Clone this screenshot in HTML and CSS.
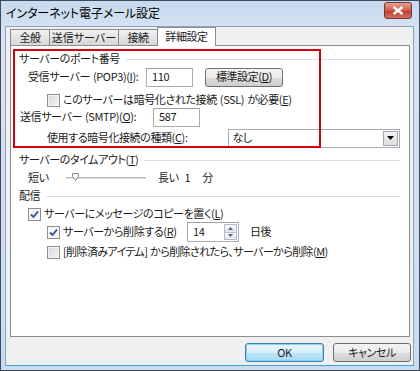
FILE: index.html
```html
<html>
  <head>
    <meta charset="utf-8">
    <link rel="stylesheet" href="styles.css">
  </head>
  <body>
    <div class="window">
      <div class="titlebar">
        <span class="title">インターネット電子メール設定</span>
        <span class="close">
          <svg width="12" height="9" viewBox="0 0 12 9"><path d="M1.5 1 L10.5 8 M10.5 1 L1.5 8" stroke="#fff" stroke-width="2.4"/></svg>
        </span>
      </div>
      <div class="client">
        <div class="tabs">
          <span class="tab t1">全般</span>
          <span class="tab t2">送信サーバー</span>
          <span class="tab t3">接続</span>
          <span class="tab sel">詳細設定</span>
        </div>
        <div class="panel">
          <div class="mark"></div>

          <div class="group g1"><span>サーバーのポート番号</span><i></i></div>
          <div class="row r-pop">
            <span class="lbl w-pop">受信サーバー (POP3)(<u>I</u>):</span>
            <span class="field f-pop">110</span>
            <span class="btn b-std">標準設定(<u>D</u>)</span>
          </div>
          <div class="row r-ssl">
            <span class="chk off"></span>
            <span>このサーバーは暗号化された接続 (SSL) が必要(<u>E</u>)</span>
          </div>
          <div class="row r-smtp">
            <span class="lbl w-smtp">送信サーバー (SMTP)(<u>O</u>):</span>
            <span class="field f-smtp">587</span>
          </div>
          <div class="row r-enc">
            <span class="lbl w-enc">使用する暗号化接続の種類(<u>C</u>):</span>
            <span class="select"><span class="sel-text">なし</span><span class="drop">
              <svg width="7" height="4" viewBox="0 0 7 4"><path d="M0 0 H7 L3.5 4 Z" fill="#000"/></svg>
            </span></span>
          </div>

          <div class="group g2"><span>サーバーのタイムアウト(<u>T</u>)</span><i></i></div>
          <div class="row r-time">
            <span class="lbl w-short">短い</span>
            <span class="slider">
              <span class="track"></span>
              <svg class="thumb" width="7" height="8" viewBox="0 0 7 8"><path d="M0.5 0.5 H6.5 V3.5 L3.5 7.5 L0.5 3.5 Z" fill="#f4f4f4" stroke="#8a8a8a"/></svg>
            </span>
            <span class="long">長い</span>
            <span class="num">1</span>
            <span class="unit">分</span>
          </div>

          <div class="group g3"><span>配信</span><i></i></div>
          <div class="row r-c1">
            <span class="chk on">
              <svg width="9" height="9" viewBox="0 0 9 9"><path d="M1 4.5 L3.5 7 L8 1.5" fill="none" stroke="#2a4f9c" stroke-width="1.8"/></svg>
            </span>
            <span>サーバーにメッセージのコピーを置く(<u>L</u>)</span>
          </div>
          <div class="row r-c2">
            <span class="chk on">
              <svg width="9" height="9" viewBox="0 0 9 9"><path d="M1 4.5 L3.5 7 L8 1.5" fill="none" stroke="#2a4f9c" stroke-width="1.8"/></svg>
            </span>
            <span class="w-del">サーバーから削除する(<u>R</u>)</span>
            <span class="field f-days">14
              <span class="spin">
                <span class="sp up"><svg width="5" height="3" viewBox="0 0 5 3"><path d="M0 3 H5 L2.5 0 Z" fill="#4d6185"/></svg></span>
                <span class="sp dn"><svg width="5" height="3" viewBox="0 0 5 3"><path d="M0 0 H5 L2.5 3 Z" fill="#4d6185"/></svg></span>
              </span>
            </span>
            <span class="days">日後</span>
          </div>
          <div class="row r-c3">
            <span class="chk off"></span>
            <span class="tight">[削除済みアイテム] から削除されたら、サーバーから削除(<u>M</u>)</span>
          </div>
        </div>
        <div class="buttons">
          <span class="btn ok">OK</span>
          <span class="btn cancel">キャンセル</span>
        </div>
      </div>
    </div>
  </body>
</html>
```

FILE: styles.css
```css
body {
  margin: 0;
  background: #ffffff;
  font-family: "Noto Sans CJK JP", "Liberation Sans", sans-serif;
  font-size: 11px;
  line-height: 1.2;
  letter-spacing: -0.4px;
  word-spacing: 1px;
  font-feature-settings: "palt";
  color: #1a1a1a;
}

u {
  text-decoration: underline;
}

.window {
  box-sizing: border-box;
  width: 420px;
  height: 371px;
  border: 1px solid #3d4b5c;
  background: linear-gradient(to bottom, #c7d9ee, #d6e3f2 30px, #c9dcef);
  padding: 0 5px 4px 4px;
  display: flex;
  flex-direction: column;
}

.titlebar {
  height: 25px;
  display: flex;
  align-items: center;
  justify-content: space-between;
  padding: 0 2px 0 1px;
}

.title {
  font-size: 12px;
  letter-spacing: -0.1px;
  margin-top: -1px;
  color: #000000;
}

.close {
  width: 26px;
  height: 15px;
  margin-top: -6px;
  border: 1px solid #6e3a3a;
  border-radius: 3px;
  background: linear-gradient(to bottom, #e8a193, #cf5a48 50%, #b8382a 51%, #d8705f);
  display: flex;
  align-items: center;
  justify-content: center;
}

.client {
  flex: 1;
  background: #f0f0f0;
  border: 1px solid #8ea4bd;
  border-bottom-color: #3aa0df;
  padding: 0 2px 0 4px;
  display: flex;
  flex-direction: column;
}

.tabs {
  height: 18px;
  display: flex;
  align-items: flex-end;
  position: relative;
  z-index: 1;
}

.tab {
  box-sizing: border-box;
  height: 16px;
  border: 1px solid #898c95;
  border-bottom: none;
  margin-right: -1px;
  background: linear-gradient(to bottom, #f2f2f2, #e3e3e3 50%, #d8d8d8);
  display: flex;
  align-items: center;
  justify-content: center;
  white-space: nowrap;
  padding-top: 1px;
}

.t1 { width: 40px; }
.t2 { width: 70px; letter-spacing: 0; }
.t3 { width: 40px; }

.tab.sel {
  width: 59px;
  height: 19px;
  margin-bottom: -1px;
  background: #ffffff;
  padding-top: 0;
}

.panel {
  box-sizing: border-box;
  width: 400px;
  height: 292px;
  border: 1px solid #898c95;
  background: #ffffff;
  padding: 5px 9px 0 8px;
  position: relative;
}

.mark {
  position: absolute;
  left: 2px;
  top: 3px;
  width: 304px;
  height: 95px;
  border: 2px solid #d4000f;
}

.group {
  display: flex;
  align-items: center;
  height: 16px;
  white-space: nowrap;
}

.group i {
  flex: 1;
  height: 0;
  border-top: 1px solid #d5dfe5;
  margin-left: 6px;
  margin-top: 1px;
}

.row {
  display: flex;
  align-items: center;
  white-space: nowrap;
}

.r-pop { height: 20px; padding-left: 9px; }
.r-ssl { height: 16px; padding-left: 28px; margin-top: 5px; }
.r-smtp { height: 18px; padding-left: 1px; }
.r-enc { height: 20px; padding-left: 28px; margin-top: 2px; }
.g2 { margin-top: 4px; }
.r-time { height: 16px; padding-left: 9px; margin-top: 2px; }
.g3 { margin-top: 2px; }
.r-c1 { height: 16px; padding-left: 9px; margin-top: 2px; }
.r-c2 { height: 20px; padding-left: 28px; }
.r-c3 { height: 16px; padding-left: 28px; margin-top: 2px; }

.tight { letter-spacing: -0.6px; }

.w-pop { width: 118px; }
.w-smtp { width: 133px; }
.w-enc { width: 182px; }
.w-short { width: 38px; }
.w-del { width: 124px; }

.field {
  box-sizing: border-box;
  height: 19px;
  border: 1px solid #abadb3;
  border-top-color: #9ea0a6;
  background: #ffffff;
  padding-left: 5px;
  display: flex;
  align-items: center;
  position: relative;
  flex-shrink: 0;
}

.f-pop { width: 47px; }
.f-smtp { width: 47px; }
.f-days { width: 52px; height: 20px; }

.spin {
  position: absolute;
  right: 1px;
  top: 1px;
  width: 13px;
  height: 16px;
  display: flex;
  flex-direction: column;
}

.sp {
  flex: 1;
  box-sizing: border-box;
  border: 1px solid #b6bcc8;
  background: linear-gradient(to bottom, #f6f8fb, #dfe5ee);
  display: flex;
  align-items: center;
  justify-content: center;
}

.sp.dn { border-top: none; }

.days { margin-left: 11px; }

.btn {
  box-sizing: border-box;
  height: 19px;
  border: 1px solid #707070;
  border-radius: 3px;
  background: linear-gradient(to bottom, #f3f3f3, #ebebeb 50%, #dddddd 51%, #cfcfcf);
  display: flex;
  align-items: center;
  justify-content: center;
  flex-shrink: 0;
}

.b-std {
  width: 78px;
  margin-left: 12px;
}

.chk {
  box-sizing: border-box;
  width: 13px;
  height: 13px;
  border: 1px solid #8e8f8f;
  background: linear-gradient(135deg, #d6d6d6, #f4f4f4);
  box-shadow: inset 0 0 0 1px #f4f4f4;
  margin-right: 3px;
  display: flex;
  align-items: center;
  justify-content: center;
  flex-shrink: 0;
}

.chk.on {
  background: #f6f6f6;
  box-shadow: none;
}

.select {
  box-sizing: border-box;
  width: 172px;
  height: 19px;
  border: 1px solid #a5acb5;
  background: #ffffff;
  display: flex;
  align-items: center;
  justify-content: space-between;
}

.sel-text { padding-left: 3px; }

.drop {
  box-sizing: border-box;
  width: 15px;
  height: 15px;
  margin-right: 1px;
  border: 1px solid #a0a6af;
  background: linear-gradient(to bottom, #f4f4f4, #dcdcdc);
  display: flex;
  align-items: center;
  justify-content: center;
}

.slider {
  width: 82px;
  height: 12px;
  position: relative;
  display: flex;
  align-items: center;
}

.track {
  width: 80px;
  height: 1px;
  border-top: 1px solid #b9b9b9;
  border-bottom: 1px solid #ffffff;
  background: #e0e0e0;
}

.thumb {
  position: absolute;
  left: 6px;
  top: 1px;
}

.long { margin-left: 10px; }
.num { margin-left: 6px; }
.unit { margin-left: 12px; }

.buttons {
  display: flex;
  justify-content: flex-end;
  gap: 9px;
  margin-top: 6px;
}

.ok {
  width: 79px;
  border-color: #3c7fb1;
  box-shadow: inset 0 0 0 1px #8fd0f2;
  background: linear-gradient(to bottom, #eaf6fd, #d9f0fc 50%, #bee6fd 51%, #a7d9f5);
}

.cancel {
  width: 78px;
}
```
